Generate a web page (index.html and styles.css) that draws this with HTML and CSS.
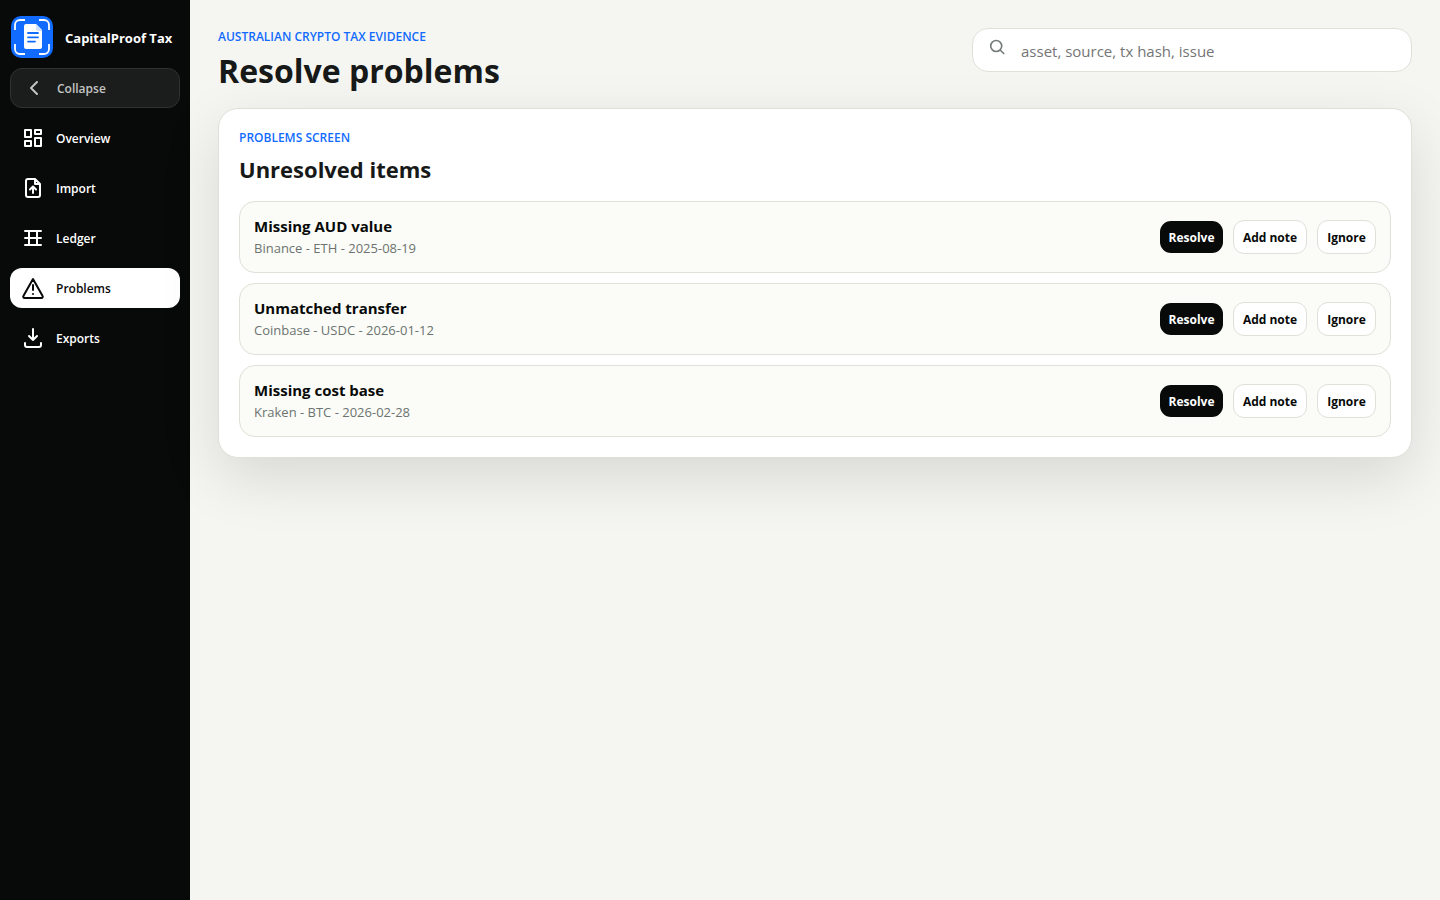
FILE: index.html
```html
<!DOCTYPE html>
<html lang="en">
<head>
<meta charset="utf-8">
<meta name="viewport" content="width=device-width, initial-scale=1">
<title>CapitalProof Tax</title>
<link rel="stylesheet" href="styles.css">
</head>
<body>
<div class="app">
  <aside class="sidebar">
    <div class="brand">
      <svg class="brand-logo" viewBox="0 0 42 42" aria-hidden="true">
        <rect width="42" height="42" rx="10" fill="#126bff"/>
        <path d="M4 14V9a5 5 0 0 1 5-5h5M28 4h5a5 5 0 0 1 5 5v5M38 28v5a5 5 0 0 1-5 5h-5M14 38H9a5 5 0 0 1-5-5v-5" fill="none" stroke="#fff" stroke-width="1.800"/>
        <path d="M15 8h10l6 6v17a2 2 0 0 1-2 2H15a2 2 0 0 1-2-2V10a2 2 0 0 1 2-2z" fill="#fff"/>
        <path d="M25 8l6 6v1h-4a2 2 0 0 1-2-2z" fill="#cfe0ff"/>
        <path d="M17 17h10M17 21.300h10M17 25.600h7" stroke="#126bff" stroke-width="1.800" stroke-linecap="round"/>
      </svg>
      <strong class="brand-name">CapitalProof Tax</strong>
    </div>
    <button class="collapse" type="button">
      <svg class="icon" viewBox="0 0 24 24" aria-hidden="true"><path d="m15 6-6 6 6 6"/></svg>
      <span>Collapse</span>
    </button>
    <nav class="nav" aria-label="Main">
      <a class="nav-item" href="#overview">
        <svg class="icon" viewBox="0 0 24 24" aria-hidden="true"><path d="M4 4h6v7H4zM14 4h6v4h-6zM14 12h6v8h-6zM4 15h6v5H4z"/></svg>
        <span>Overview</span>
      </a>
      <a class="nav-item" href="#import">
        <svg class="icon" viewBox="0 0 24 24" aria-hidden="true"><path d="M14 3H7a2 2 0 0 0-2 2v14a2 2 0 0 0 2 2h10a2 2 0 0 0 2-2V8zM14 3v5h5M12 17v-6M9 13.500l3-3 3 3"/></svg>
        <span>Import</span>
      </a>
      <a class="nav-item" href="#ledger">
        <svg class="icon" viewBox="0 0 24 24" aria-hidden="true"><path d="M4 5h16M4 12h16M4 19h16M8 5v14M16 5v14"/></svg>
        <span>Ledger</span>
      </a>
      <a class="nav-item active" href="#problems" aria-current="page">
        <svg class="icon" viewBox="0 0 24 24" aria-hidden="true"><path d="M12 3 2.400 20a1.300 1.300 0 0 0 1.100 2h17a1.300 1.300 0 0 0 1.100-2zM12 9v5M12 18v.100"/></svg>
        <span>Problems</span>
      </a>
      <a class="nav-item" href="#exports">
        <svg class="icon" viewBox="0 0 24 24" aria-hidden="true"><path d="M12 3v11M8 10l4 4 4-4M4 17v2a2 2 0 0 0 2 2h12a2 2 0 0 0 2-2v-2"/></svg>
        <span>Exports</span>
      </a>
    </nav>
  </aside>

  <main class="main">
    <header class="topbar">
      <div>
        <p class="eyebrow">AUSTRALIAN CRYPTO TAX EVIDENCE</p>
        <h1 class="title">Resolve problems</h1>
      </div>
      <label class="search">
        <svg class="search-icon" viewBox="0 0 18 18" aria-hidden="true"><circle cx="7.200" cy="8" r="5.500"/><path d="m11.200 12 4 4"/></svg>
        <input class="search-input" type="text" aria-label="Search" placeholder="asset, source, tx hash, issue">
      </label>
    </header>

    <section class="panel">
      <p class="eyebrow">PROBLEMS SCREEN</p>
      <h2 class="panel-title">Unresolved items</h2>
      <div class="issues">
        <article class="issue">
          <div>
            <h3 class="issue-title">Missing AUD value</h3>
            <p class="issue-meta">Binance - ETH - 2025-08-19</p>
          </div>
          <div class="actions">
            <button class="btn primary" type="button">Resolve</button>
            <button class="btn" type="button">Add note</button>
            <button class="btn" type="button">Ignore</button>
          </div>
        </article>
        <article class="issue">
          <div>
            <h3 class="issue-title">Unmatched transfer</h3>
            <p class="issue-meta">Coinbase - USDC - 2026-01-12</p>
          </div>
          <div class="actions">
            <button class="btn primary" type="button">Resolve</button>
            <button class="btn" type="button">Add note</button>
            <button class="btn" type="button">Ignore</button>
          </div>
        </article>
        <article class="issue">
          <div>
            <h3 class="issue-title">Missing cost base</h3>
            <p class="issue-meta">Kraken - BTC - 2026-02-28</p>
          </div>
          <div class="actions">
            <button class="btn primary" type="button">Resolve</button>
            <button class="btn" type="button">Add note</button>
            <button class="btn" type="button">Ignore</button>
          </div>
        </article>
      </div>
    </section>
  </main>
</div>
</body>
</html>
```
FILE: styles.css
```css
* { box-sizing: border-box; }

body {
  margin: 0;
  background: #f5f6f1;
  color: #171918;
  font-family: "Segoe UI", "Open Sans", "Noto Sans", sans-serif;
  font-size: 15px;
}

h1, h2, h3, p { margin: 0; }
button, input { font: inherit; }

.app {
  display: grid;
  grid-template-columns: 190px minmax(0, 1fr);
  min-height: 100vh;
}

.sidebar {
  display: flex;
  flex-direction: column;
  gap: 10px;
  padding: 16px 10px;
  background: #080a09;
  color: #fff;
}

.brand {
  display: flex;
  align-items: center;
  gap: 12px;
  padding-left: 1px;
  white-space: nowrap;
}

.brand-logo { width: 42px; height: 42px; flex: none; }
.brand-name { padding-top: 2px; font-size: 13px; font-weight: 700; }

.icon {
  width: 24px;
  height: 24px;
  flex: none;
  fill: none;
  stroke: currentColor;
  stroke-width: 2;
  stroke-linecap: round;
  stroke-linejoin: round;
}

.collapse, .nav-item {
  display: flex;
  align-items: center;
  gap: 11px;
  height: 40px;
  padding: 0 11px;
  border-radius: 12px;
  font-size: 12px;
  font-weight: 600;
}

.collapse {
  border: 1px solid #303231;
  background: #1b1d1c;
  color: #c3c4c3;
}

.nav { display: flex; flex-direction: column; gap: 10px; }
.nav-item { color: #fff; text-decoration: none; }
.nav-item.active { background: #fff; color: #080a09; }

.main { padding: 28px; }

.topbar {
  display: flex;
  justify-content: space-between;
  align-items: flex-start;
  margin-bottom: 12px;
}

.eyebrow {
  color: #126bff;
  font-size: 12px;
  font-weight: 600;
  line-height: 18px;
}

.title {
  font-size: 32px;
  font-weight: 700;
  line-height: 50px;
}

.search {
  display: flex;
  align-items: center;
  gap: 14px;
  width: 440px;
  height: 44px;
  padding: 0 16px;
  border: 1px solid #dfe1d8;
  border-radius: 16px;
  background: #fff;
}

.search-icon {
  width: 18px;
  height: 18px;
  margin-bottom: 6px;
  fill: none;
  stroke: #747b78;
  stroke-width: 1.6;
}

.search-input {
  flex: 1;
  min-width: 0;
  padding: 2px 0 0;
  border: 0;
  outline: 0;
  background: transparent;
  color: inherit;
}

.search-input::placeholder { color: #757575; }

.panel {
  padding: 20px;
  border: 1px solid #dfe1d8;
  border-radius: 20px;
  background: #fff;
  box-shadow: 0 20px 60px rgba(8, 10, 9, 0.12);
}

.panel-title {
  margin: 4px 0 14px;
  font-size: 22px;
  font-weight: 700;
  line-height: 36px;
}

.issues { display: grid; gap: 10px; }

.issue {
  display: flex;
  align-items: center;
  justify-content: space-between;
  min-height: 72px;
  padding: 12px 14px;
  border: 1px solid #dfe1d8;
  border-radius: 16px;
  background: #fbfcf7;
}

.issue-title { font-size: 15px; font-weight: 700; line-height: 22px; color: #080a09; }
.issue-meta { font-size: 13px; line-height: 22px; color: #6c7370; }

.actions {
  display: grid;
  grid-template-columns: 63px 74px 59px;
  align-items: center;
  gap: 10px;
}

.btn {
  height: 34px;
  padding: 0 8px;
  border: 1px solid #dfe1d8;
  border-radius: 11px;
  background: #fff;
  color: #080a09;
  font-size: 12px;
  font-weight: 700;
  white-space: nowrap;
}

.btn.primary { height: 32px; border: 0; background: #080a09; color: #fff; }
```
